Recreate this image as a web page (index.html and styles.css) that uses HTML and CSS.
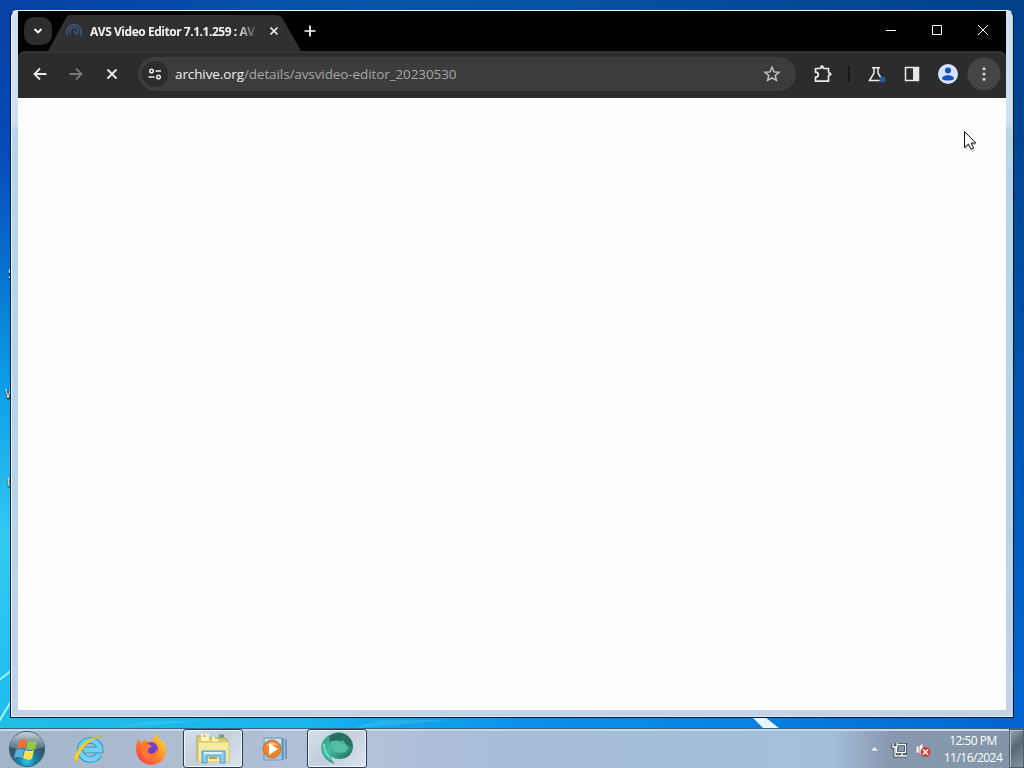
FILE: index.html
```html
<!DOCTYPE html>
<html lang="en">
<head>
<meta charset="utf-8">
<title>Desktop</title>
<link rel="stylesheet" href="styles.css">
</head>
<body>
<div class="desktop">
  <svg class="wallpaper" width="1024" height="768" viewBox="0 0 1024 768" aria-hidden="true">
    <defs>
      <linearGradient id="leftSky" x2="0" y2="1"><stop stop-color="#0641a4"/><stop offset=".2" stop-color="#064bb8"/><stop offset=".36" stop-color="#0874d2"/><stop offset=".5" stop-color="#0b9de7"/><stop offset=".7" stop-color="#33c9f2"/><stop offset=".9" stop-color="#20bfef"/><stop offset="1" stop-color="#18b4ea"/></linearGradient>
      <linearGradient id="rightSky" x2="0" y2="1"><stop stop-color="#00408b"/><stop offset=".2" stop-color="#004592"/><stop offset=".5" stop-color="#0052ad"/><stop offset=".72" stop-color="#005dc4"/><stop offset="1" stop-color="#0068d5"/></linearGradient>
      <linearGradient id="topSky"><stop stop-color="#0641a4"/><stop offset=".35" stop-color="#0755aa"/><stop offset=".6" stop-color="#07509f"/><stop offset="1" stop-color="#00408b"/></linearGradient>
      <linearGradient id="lowSky"><stop stop-color="#20bfe8"/><stop offset=".3" stop-color="#18b4ee"/><stop offset=".5" stop-color="#0a93ea"/><stop offset=".75" stop-color="#0580e2"/><stop offset="1" stop-color="#0063cf"/></linearGradient>
    </defs>
    <path fill="url(#leftSky)" d="M0 0h512v768H0z"/>
    <path fill="url(#rightSky)" d="M512 0h512v768H512z"/>
    <path fill="url(#topSky)" d="M0 0h1024v14H0z"/>
    <path fill="url(#lowSky)" d="M0 715h1024v16H0z"/>
    <path d="M-2 681L12 670M-2 723L12 700" stroke="#a6f2ef" stroke-width="2"/>
    <path d="M752 717h13l15 12h-16z" fill="#e8f8ff"/>
    <path d="M115 728l30-7h60zM350 729l30-9h70z" fill="#62d5f2" opacity=".25"/>
  </svg>
  <span class="label label-s">S</span>
  <span class="label label-w">W</span>
  <span class="label label-u">U</span>

  <main class="workspace">
    <section class="window">
      <div class="browser">
        <header class="tabstrip">
          <svg width="988" height="40" viewBox="18 11 988 40" class="tabshape" aria-hidden="true">
            <rect x="24" y="17" width="28" height="28" rx="10" fill="#2d2d2d"/>
            <path d="M48 51L66 18q1-3 5-3h205q5 0 7 4l18 32z" fill="#303030"/>
            <path d="M34.500 29l3.500 3.500 3.500-3.500" fill="none" stroke="#fff" stroke-width="1.900"/>
            <g fill="none" stroke="#3d5680" stroke-width="1.600"><path d="M67.500 35.500a7.300 7.300 0 1 1 13 0"/><path d="M71 34a4 4 0 1 1 6.500-.5M74 31l3 4"/></g>
            <path d="M270.500 27.500l7 7m0-7l-7 7" stroke="#eee" stroke-width="1.700"/>
            <path d="M304.500 31h11M310 25.500v11" stroke="#fff" stroke-width="1.700"/>
            <path d="M886 30.500h10M932.500 25.500h9v9h-9zM978 25l10 10m0-10l-10 10" fill="none" stroke="#fff"/>
          </svg>
          <span class="tabtitle">AVS Video Editor 7.1.1.259 : AV</span>
        </header>
        <div class="toolbar">
          <svg width="988" height="47" viewBox="18 51 988 47" class="toolshape" aria-hidden="true">
            <rect x="138" y="57" width="658" height="34" rx="17" fill="#3c3c3c"/>
            <circle cx="155" cy="74" r="13" fill="#2c2c2c"/>
            <g fill="none" stroke="#e9e9e9" stroke-width="1.800">
              <path d="M46.500 74H35m5-5.500L34.500 74l5.500 5.500"/>
              <path d="M69.500 74H81m-5-5.500l5.500 5.500-5.500 5.500" stroke="#77776e"/>
              <path d="M107.500 69.500l9 9m0-9l-9 9"/>
              <g stroke-width="1.500"><circle cx="151.500" cy="71" r="1.800"/><path d="M155.500 71h5.500M148.500 77h6"/><circle cx="158.500" cy="77" r="1.800"/></g>
              <path d="M772 67.300l2 4.600 5 .4-3.800 3.200 1.200 4.900-4.400-2.600-4.400 2.600 1.200-4.900-3.800-3.200 5-.4z" stroke="#c8c8c8" stroke-width="1.400"/>
              <path d="M815.500 68.500h5.300m2.400 0h5.300v4.300m0 2.400v6h-13v-4q2.800-.2 2.800-2.500t-2.800-2.500v-4.200" stroke-width="1.700"/>
              <path d="M872 67.700h8M874 68v5l-4.500 7.500h13l-4.500-7.500v-5" stroke-width="1.500"/>
              <rect x="905.500" y="67.500" width="13" height="13" stroke-width="1.500"/>
            </g>
            <path d="M820 68.500q0-3.200 2-3.200t2 3.200zM828.500 72q3 0 3 2t-3 2z" fill="#e9e9e9"/>
            <path d="M913 67h6v14h-6z" fill="#e9e9e9"/>
            <circle cx="882.300" cy="79.500" r="3" fill="#255b9f"/>
            <path d="M849 66v16" stroke="#101010" stroke-width="1.500"/>
            <circle cx="948" cy="74" r="10" fill="#d5e4fc"/><circle cx="948" cy="70.500" r="3" fill="#174fc4"/><path d="M942 79c0-5 12-5 12 0-3 2-9 2-12 0z" fill="#174fc4"/>
            <circle cx="984" cy="74" r="16.500" fill="#454545"/>
            <g fill="#d6d6d6"><circle cx="984" cy="68.800" r="1.500"/><circle cx="984" cy="74" r="1.500"/><circle cx="984" cy="79.200" r="1.500"/></g>
          </svg>
          <span class="address"><b class="host">archive.org</b><span class="path">/details/avsvideo-editor_20230530</span></span>
        </div>
        <div class="page"></div>
      </div>
    </section>
  </main>

  <footer class="taskbar">
    <div class="launchers">
      <div class="launcher start">
        <svg width="38" height="38" viewBox="0 0 38 38"><defs><radialGradient id="orb" cx=".5" cy=".85"><stop stop-color="#29c8ee"/><stop offset=".5" stop-color="#197fa5"/><stop offset="1" stop-color="#355466"/></radialGradient><linearGradient id="gloss" x2="0" y2="1"><stop stop-color="#fff" stop-opacity=".75"/><stop offset="1" stop-color="#bed2df" stop-opacity=".2"/></linearGradient></defs><circle cx="19" cy="19" r="17.500" fill="url(#orb)" stroke="#385e74"/><path d="M2 17a17 15 0 0 1 34 0q-17 7-34 0" fill="url(#gloss)"/><path d="M11 11q4-3 8-1l-2 8q-4-2-8 1z" fill="#ee7038"/><path d="M20 11q4 2 9 0l-2 8q-5 2-9 0z" fill="#94c844"/><path d="M8 20q4-2 8 0l-2 8q-4-2-8 0z" fill="#5dafdf"/><path d="M17 20q5 2 9 0l-2 9q-4 2-9-1z" fill="#ffe254"/></svg>
      </div>
      <div class="launcher">
        <svg width="34" height="34" viewBox="0 0 34 34"><path d="M27 22.500a10 9.500 0 1 1 1.200-4.500H12" fill="none" stroke="#288fc5" stroke-width="6.500"/><path d="M27 22.500a10 9.500 0 1 1 1.200-4.500H12" fill="none" stroke="#70d1f2" stroke-width="4.800"/><path d="M3 30C-1 23 14 3 31 4c-9 0-24 13-25 24z" fill="#f5cf33" stroke="#d0b03f" stroke-width=".6"/></svg>
      </div>
      <div class="launcher">
        <svg width="34" height="34" viewBox="0 0 34 34"><defs><linearGradient id="fox" x1="1" x2="0" y2="1"><stop stop-color="#ffe63d"/><stop offset=".4" stop-color="#ff9929"/><stop offset="1" stop-color="#f12e49"/></linearGradient></defs><path d="M4 7l3 4 4-3 4 2 4-1q0-5 4-7l2 5q8 3 7 12-1 13-15 14Q3 31 2 18q0-6 2-11z" fill="url(#fox)"/><circle cx="17" cy="17" r="7" fill="#7545cf"/><path d="M7 12q4-2 7 0l4 2-4 3q-1 4 3 4 5 0 6-4 2 9-6 10Q5 26 7 12z" fill="#ff7836"/><path d="M15 17q4 0 5-4 4 8-3 9-4-1-2-5z" fill="#6840bd"/></svg>
      </div>
      <div class="launcher active">
        <svg width="36" height="36" viewBox="0 0 36 36"><path d="M2 5h10l2 2h17l2 3v20H2z" fill="#dccd78" stroke="#b5a655"/><path d="M6 3h8v7H6zM17 6h6v5h-6z" fill="#fff5bb"/><path d="M8 5h3M20 7h3" stroke="#8d8050"/><path d="M24 5h5" stroke="#6ba56a" stroke-width="3"/><path d="M3 11h31v18q0 2-2 2H3z" fill="#f7eaa3" stroke="#d5c46e"/><path d="M7 32V20h23v12h-5v-7H12v7z" fill="#8dcaf0" stroke="#479dcc"/><path d="M9 22h18" stroke="#dbf4ff" stroke-width="2"/><path d="M14 27h8" stroke="#ba9e4c" stroke-width="2"/></svg>
      </div>
      <div class="launcher media">
        <svg width="32" height="32" viewBox="0 0 32 32"><path d="M6 5h18v22H6z" fill="#9bc9eb" stroke="#709ec0"/><path d="M25 5v22M28 6v20" stroke="#4283b4" stroke-width="1.200"/><path d="M7 6h16v5H7z" fill="#c9e7f5"/><circle cx="14" cy="16" r="9" fill="#eb842a" stroke="#ce7129"/><path d="M8 13q5-7 12-1z" fill="#ffc185"/><path d="M11 10l9 6-9 6z" fill="#fff"/></svg>
      </div>
      <div class="launcher active">
        <svg width="36" height="36" viewBox="0 0 36 36"><defs><linearGradient id="teal" x2="1" y2="1"><stop stop-color="#348f7c"/><stop offset=".4" stop-color="#43bca2"/><stop offset="1" stop-color="#185d50"/></linearGradient></defs><path d="M16 33C-2 28-1 9 11 4q9-6 18 1 6 5 5 12-2 11-14 11-5 0-8-3 0 4 4 8z" fill="url(#teal)"/><path d="M10 5q11-7 20 1 4 5 3 10l-6-3-3-4-4 2q-5-3-9 0z" fill="#27705f"/><path d="M12 12q6-5 11 0 4 1 6 5-1 5-8 5-8 0-9-10z" fill="#55bda3"/><path d="M4 13q0 10 9 17l-3-6q-4-4-4-11z" fill="#79ddc2"/></svg>
      </div>
    </div>
    <div class="tray">
      <svg width="70" height="26" viewBox="868 736 70 26" class="trayicons"><path d="M870 751l4.500-4 4.500 4z" fill="#f4f5f6" stroke="#687784" stroke-width=".5"/><g fill="none" stroke="#303a46" stroke-width="3"><path d="M897.500 744.500h8v8h-9v-6M899 756h8M902 753v3M893 743v4h4v-4M895 747v9h3"/></g><g fill="none" stroke="#fff" stroke-width="1.300"><path d="M897.500 744.500h8v8h-9v-6M899 756h8M902 753v3M893 743v4h4v-4M895 747v9h3"/></g><path d="M916 746v7h3l4 4v-14l-4 3z" fill="#fff" stroke="#616c77" stroke-width=".6"/><path d="M919 746v7" stroke="#858e97"/><circle cx="925.500" cy="752" r="5" fill="#d63e31"/><path d="M923 749.500l5 5m0-5l-5 5" stroke="#fff" stroke-width="1.500"/></svg>
      <div class="clock"><span class="time">12:50 PM</span><span class="date">11/16/2024</span></div>
      <div class="peek"></div>
    </div>
  </footer>
  <svg class="cursor" width="18" height="24" viewBox="0 0 18 24" aria-hidden="true"><path d="M2 3v17l4-4 3 6 3-1-3-6h5z" fill="#999" opacity=".5"/><path d="M1.500 1.500v16l4-3.500 2.500 5.200 2.500-1.200-2.300-5h4.600z" fill="#fff" stroke="#111"/></svg>
</div>
</body>
</html>
```

FILE: styles.css
```css
* { box-sizing: border-box; }
body { margin: 0; overflow: hidden; font-family: "Open Sans", "Noto Sans", sans-serif; }
.desktop { position: relative; width: 1024px; height: 768px; display: flex; flex-direction: column; overflow: hidden; }
.wallpaper { position: absolute; inset: 0; }
svg { display: block; flex-shrink: 0; }
.label { position: absolute; color: #fff; font-size: 12px; line-height: 14px; text-shadow: 1px 1px 2px #000, 0 1px 1px #000; }
.label-s { left: 8px; top: 267px; }
.label-w { left: 5px; top: 387px; }
.label-u { left: 7px; top: 476px; }
.workspace { position: relative; height: 728px; padding: 10px; }
.window { width: 1004px; height: 708px; padding: 0 6px 7px 7px; border: 1px solid #07182b; border-top-color: #effaff; border-radius: 7px 7px 0 0; background: linear-gradient(#d0e1f2 0 110px, #b7d5e9 120px, #bad4e7 70%, #c3d2e8); box-shadow: inset 1px 0 #e6f8ff, inset -1px 0 #a4d5eb, inset 0 -1px #d8eefa; }
.browser { width: 988px; height: 699px; display: flex; flex-direction: column; background: #000; }
.tabstrip { height: 40px; display: flex; background: #000; }
.tabshape, .toolshape { margin-right: -988px; }
.tabtitle { position: relative; align-self: center; margin-left: 72px; padding-top: 1px; width: 170px; white-space: nowrap; color: #f3f3f3; font-size: 12px; font-weight: 700; line-height: 20px; letter-spacing: -.46px; -webkit-mask-image: linear-gradient(90deg, #000 146px, transparent 169px); mask-image: linear-gradient(90deg, #000 146px, transparent 169px); }
.toolbar { height: 47px; display: flex; background: #2c2c2c; border-radius: 7px 7px 0 0; box-shadow: inset 0 2px #343434; }
.address { position: relative; margin-left: 157px; padding-bottom: 2px; align-self: center; font-size: 13.500px; line-height: 20px; white-space: nowrap; color: #a7a7a7; letter-spacing: -.1px; }
.host { color: #f0f0f0; font-weight: 400; }
.page { flex: 1; background: #fefefe; }
.taskbar { position: relative; height: 40px; display: flex; justify-content: space-between; border-top: 1px solid #386585; background: linear-gradient(90deg, #a0b5c9 0, #afbdd1 18%, #b1c1d7 37%, #a6bdd8 50%, #a4bfdc 81%, #8799af 87%, #8395a7 100%); box-shadow: inset 0 2px #c7d9e7; }
.launchers { display: flex; gap: 2px; }
.launcher { width: 60px; height: 39px; display: flex; align-items: center; justify-content: center; }
.start { width: 57px; padding-right: 3px; }
.media { padding-right: 3px; }
.launcher.active { border: 1px solid #263c56; border-radius: 3px; background: linear-gradient(135deg, #d7e0ec, #c2cedd 45%, #dce4ee); box-shadow: inset 0 0 0 1px #f0f5fa; }
.tray { display: flex; align-items: center; }
.trayicons { margin-right: 1px; }
.clock { width: 70px; padding-right: 2px; display: flex; flex-direction: column; align-items: center; color: #fff; font-size: 12px; line-height: 17px; letter-spacing: -.52px; }
.time, .date { white-space: nowrap; }
.peek { width: 15px; height: 39px; border: 1px solid #4e5e6c; box-shadow: inset 1px 1px #b4c0c9; background: linear-gradient(135deg, #94a2ad, #596974 45%, #8495a0); }
.cursor { position: absolute; left: 963px; top: 130px; }
```
